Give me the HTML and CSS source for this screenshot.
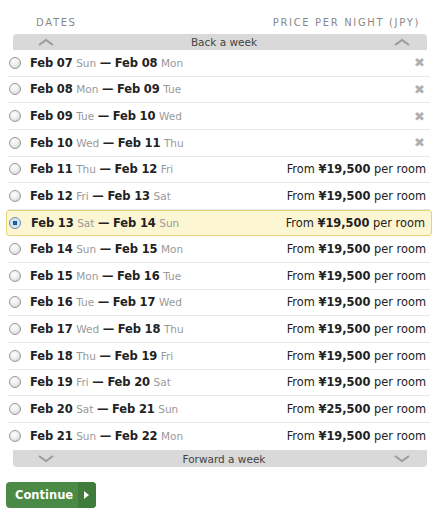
FILE: index.html
```html
<!DOCTYPE html>
<html>
<head>
<meta charset="utf-8">
<link rel="stylesheet" href="styles.css">
</head>
<body>
<div class="page">
  <div class="head">
    <span class="h-dates">DATES</span>
    <span class="h-price">PRICE PER NIGHT (JPY)</span>
  </div>
  <div class="bar bar-top">
    <svg class="chev" width="16" height="8" viewBox="0 0 16 8"><path d="M1 7 L8 2 L15 7" fill="none" stroke="#9a9a9a" stroke-width="2"/></svg>
    <span class="bar-label">Back a week</span>
    <svg class="chev" width="16" height="8" viewBox="0 0 16 8"><path d="M1 7 L8 2 L15 7" fill="none" stroke="#9a9a9a" stroke-width="2"/></svg>
  </div>
  <div class="rows">
    <div class="row"><span class="radio"></span><span class="dates"><b>Feb 07</b> <span class="day">Sun</span> <b>—</b> <b>Feb 08</b> <span class="day">Mon</span></span><span class="x">✖</span></div>
    <div class="row"><span class="radio"></span><span class="dates"><b>Feb 08</b> <span class="day">Mon</span> <b>—</b> <b>Feb 09</b> <span class="day">Tue</span></span><span class="x">✖</span></div>
    <div class="row"><span class="radio"></span><span class="dates"><b>Feb 09</b> <span class="day">Tue</span> <b>—</b> <b>Feb 10</b> <span class="day">Wed</span></span><span class="x">✖</span></div>
    <div class="row"><span class="radio"></span><span class="dates"><b>Feb 10</b> <span class="day">Wed</span> <b>—</b> <b>Feb 11</b> <span class="day">Thu</span></span><span class="x">✖</span></div>
    <div class="row"><span class="radio"></span><span class="dates"><b>Feb 11</b> <span class="day">Thu</span> <b>—</b> <b>Feb 12</b> <span class="day">Fri</span></span><span class="price">From <b>¥19,500</b> per room</span></div>
    <div class="row"><span class="radio"></span><span class="dates"><b>Feb 12</b> <span class="day">Fri</span> <b>—</b> <b>Feb 13</b> <span class="day">Sat</span></span><span class="price">From <b>¥19,500</b> per room</span></div>
    <div class="row selected"><span class="radio on"></span><span class="dates"><b>Feb 13</b> <span class="day">Sat</span> <b>—</b> <b>Feb 14</b> <span class="day">Sun</span></span><span class="price">From <b>¥19,500</b> per room</span></div>
    <div class="row"><span class="radio"></span><span class="dates"><b>Feb 14</b> <span class="day">Sun</span> <b>—</b> <b>Feb 15</b> <span class="day">Mon</span></span><span class="price">From <b>¥19,500</b> per room</span></div>
    <div class="row"><span class="radio"></span><span class="dates"><b>Feb 15</b> <span class="day">Mon</span> <b>—</b> <b>Feb 16</b> <span class="day">Tue</span></span><span class="price">From <b>¥19,500</b> per room</span></div>
    <div class="row"><span class="radio"></span><span class="dates"><b>Feb 16</b> <span class="day">Tue</span> <b>—</b> <b>Feb 17</b> <span class="day">Wed</span></span><span class="price">From <b>¥19,500</b> per room</span></div>
    <div class="row"><span class="radio"></span><span class="dates"><b>Feb 17</b> <span class="day">Wed</span> <b>—</b> <b>Feb 18</b> <span class="day">Thu</span></span><span class="price">From <b>¥19,500</b> per room</span></div>
    <div class="row"><span class="radio"></span><span class="dates"><b>Feb 18</b> <span class="day">Thu</span> <b>—</b> <b>Feb 19</b> <span class="day">Fri</span></span><span class="price">From <b>¥19,500</b> per room</span></div>
    <div class="row"><span class="radio"></span><span class="dates"><b>Feb 19</b> <span class="day">Fri</span> <b>—</b> <b>Feb 20</b> <span class="day">Sat</span></span><span class="price">From <b>¥19,500</b> per room</span></div>
    <div class="row"><span class="radio"></span><span class="dates"><b>Feb 20</b> <span class="day">Sat</span> <b>—</b> <b>Feb 21</b> <span class="day">Sun</span></span><span class="price">From <b>¥25,500</b> per room</span></div>
    <div class="row last"><span class="radio"></span><span class="dates"><b>Feb 21</b> <span class="day">Sun</span> <b>—</b> <b>Feb 22</b> <span class="day">Mon</span></span><span class="price">From <b>¥19,500</b> per room</span></div>
  </div>
  <div class="bar bar-bottom">
    <svg class="chev" width="16" height="8" viewBox="0 0 16 8"><path d="M1 1 L8 6 L15 1" fill="none" stroke="#9a9a9a" stroke-width="2"/></svg>
    <span class="bar-label">Forward a week</span>
    <svg class="chev" width="16" height="8" viewBox="0 0 16 8"><path d="M1 1 L8 6 L15 1" fill="none" stroke="#9a9a9a" stroke-width="2"/></svg>
  </div>
  <div class="actions">
    <button class="btn"><span class="btn-label">Continue</span><span class="btn-arrow"><svg width="6" height="8" viewBox="0 0 6 8"><path d="M0 0 L5 4 L0 8 Z" fill="#fff"/></svg></span></button>
  </div>
</div>
</body>
</html>
```
FILE: styles.css
```css
* { box-sizing: border-box; }
body {
  margin: 0;
  background: #fff;
  font-family: "DejaVu Sans", Verdana, sans-serif;
  color: #222;
}
.page {
  width: 436px;
  padding-top: 17px;
}
.head {
  display: flex;
  justify-content: space-between;
  padding: 0 16px 0 36px;
  height: 17px;
  font-size: 10px;
  letter-spacing: 1.65px;
  color: #888;
}
.bar {
  margin: 0 9px 0 13px;
  height: 16px;
  background: #d9d9d9;
  display: flex;
  align-items: center;
  justify-content: space-between;
  padding: 0 17px 0 25px;
  font-size: 10.5px;
  color: #444;
}
.bar-top { border-radius: 4px 4px 0 0; }
.bar-bottom { border-radius: 0 0 4px 4px; height: 17px; margin-top: 1px; }
.chev { display: block; }
.rows {
  margin: 0 4px 0 6px;
}
.row {
  height: 26.64px;
  display: flex;
  align-items: center;
  padding: 0 4px 0 1px;
  border-bottom: 1px solid #e6e6e6;
  margin: 0 2px;
}
.row.last { border-bottom: none; }
.row.selected {
  margin: 0;
  padding: 0 6px 0 1px;
  background: #fdf6d2;
  border: 1px solid #e5d57a;
  border-radius: 3px;
}
.radio {
  width: 12px;
  height: 12px;
  border-radius: 50%;
  border: 1px solid #9a9a9a;
  background: radial-gradient(circle at 40% 35%, #ffffff 0%, #eeeeee 45%, #c8c8c8 100%);
  flex: none;
  margin-right: 9px;
}
.row.selected .radio { margin-left: 1px; margin-right: 10px; }
.radio.on {
  background: radial-gradient(circle at 50% 50%, #2b6fb0 0%, #1d4f86 30%, #cfe0f0 36%, #eef4fa 100%);
  border-color: #6a8bb0;
}
.dates {
  flex: 1;
  font-size: 11.5px;
  white-space: nowrap;
}
.dates b { font-weight: bold; color: #222; letter-spacing: -0.15px; }
.day {
  font-size: 10.5px;
  color: #999;
}
.price {
  font-size: 11.4px;
  color: #222;
  white-space: nowrap;
}
.x {
  font-size: 13px;
  color: #b0b0b0;
  margin-right: 1px;
}
.actions {
  padding: 15px 0 0 6px;
}
.btn {
  display: flex;
  align-items: stretch;
  height: 26px;
  padding: 0;
  border: none;
  border-radius: 4px;
  background: #4b8946;
  overflow: hidden;
  font-family: "DejaVu Sans", Verdana, sans-serif;
  cursor: pointer;
}
.btn-label {
  display: flex;
  align-items: center;
  padding: 0 5px 0 9px;
  color: #fff;
  font-weight: bold;
  font-size: 11.5px;
}
.btn-arrow {
  display: flex;
  align-items: center;
  justify-content: center;
  width: 18px;
  background: #3f7b3a;
}
.btn-arrow svg { display: block; }
```
